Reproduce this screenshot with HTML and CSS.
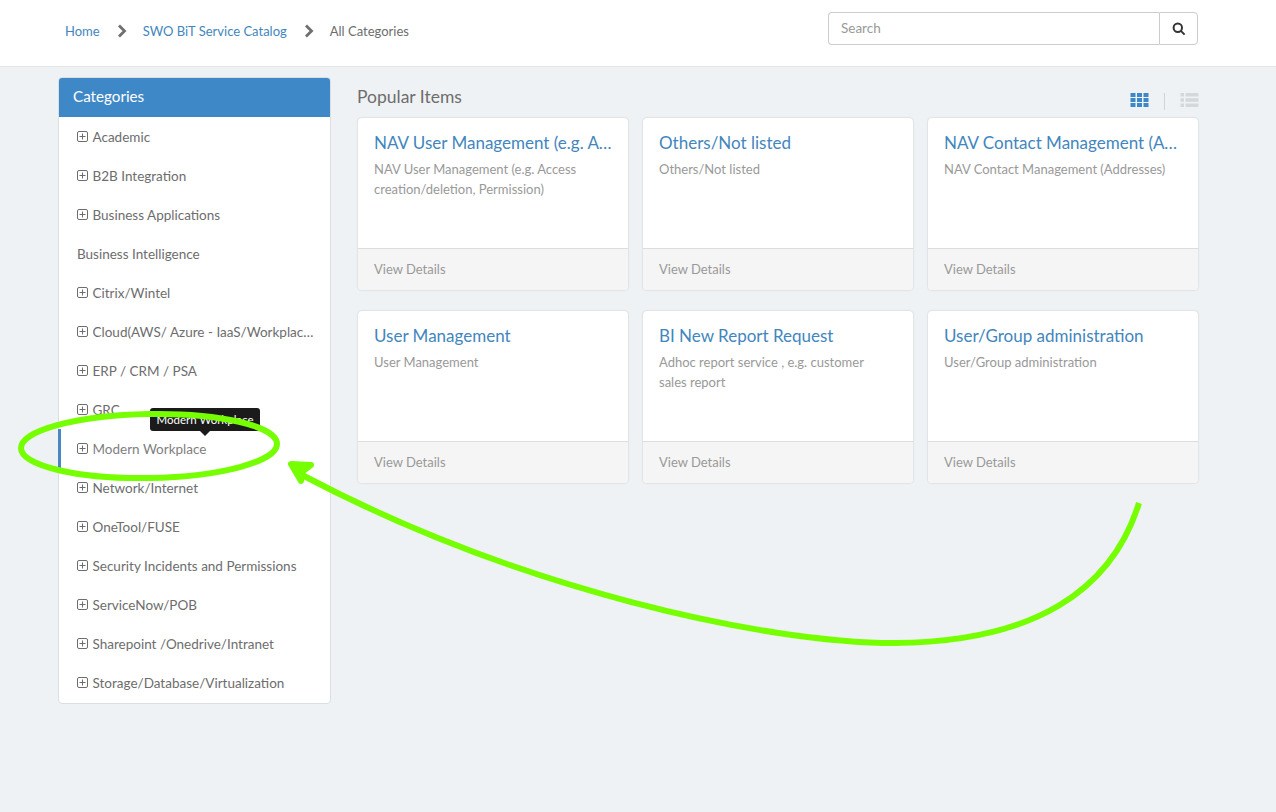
FILE: index.html
```html
<!DOCTYPE html>
<html lang="en">
<head>
    <meta charset="UTF-8">
    <title>All Categories</title>
    <link rel="stylesheet" href="styles.css">
</head>
<body>

    <header class="topbar">
        <nav class="crumbs">
            <a href="#">Home</a>
            <svg class="chev" viewBox="0 0 10 14"><path d="M2 1.5 7.5 7 2 12.5" /></svg>
            <a href="#">SWO BiT Service Catalog</a>
            <svg class="chev" viewBox="0 0 10 14"><path d="M2 1.5 7.5 7 2 12.5" /></svg>
            <span>All Categories</span>
        </nav>
        <div class="search">
            <input type="text" placeholder="Search">
            <button type="button" aria-label="Search">
                <svg viewBox="0 0 14 14"><circle cx="5.8" cy="5.8" r="4.2" /><path d="M8.9 8.9 12.6 12.6" /></svg>
            </button>
        </div>
    </header>

    <div class="page">
        <aside class="sidebar">
            <h2>Categories</h2>
            <ul>
                <li><svg class="plus" viewBox="0 0 11 11"><rect x=".5" y=".5" width="10" height="10" rx="1.5" /><path d="M5.5 2.5v6M2.5 5.5h6" /></svg>Academic</li>
                <li><svg class="plus" viewBox="0 0 11 11"><rect x=".5" y=".5" width="10" height="10" rx="1.5" /><path d="M5.5 2.5v6M2.5 5.5h6" /></svg>B2B Integration</li>
                <li><svg class="plus" viewBox="0 0 11 11"><rect x=".5" y=".5" width="10" height="10" rx="1.5" /><path d="M5.5 2.5v6M2.5 5.5h6" /></svg>Business Applications</li>
                <li class="leaf">Business Intelligence</li>
                <li><svg class="plus" viewBox="0 0 11 11"><rect x=".5" y=".5" width="10" height="10" rx="1.5" /><path d="M5.5 2.5v6M2.5 5.5h6" /></svg>Citrix/Wintel</li>
                <li><svg class="plus" viewBox="0 0 11 11"><rect x=".5" y=".5" width="10" height="10" rx="1.5" /><path d="M5.5 2.5v6M2.5 5.5h6" /></svg><span class="clip">Cloud(AWS/ Azure - IaaS/Workplace/Networking)</span></li>
                <li><svg class="plus" viewBox="0 0 11 11"><rect x=".5" y=".5" width="10" height="10" rx="1.5" /><path d="M5.5 2.5v6M2.5 5.5h6" /></svg>ERP / CRM / PSA</li>
                <li><svg class="plus" viewBox="0 0 11 11"><rect x=".5" y=".5" width="10" height="10" rx="1.5" /><path d="M5.5 2.5v6M2.5 5.5h6" /></svg>GRC</li>
                <li class="active"><svg class="plus" viewBox="0 0 11 11"><rect x=".5" y=".5" width="10" height="10" rx="1.5" /><path d="M5.5 2.5v6M2.5 5.5h6" /></svg>Modern Workplace<div class="tip">Modern Workplace</div></li>
                <li><svg class="plus" viewBox="0 0 11 11"><rect x=".5" y=".5" width="10" height="10" rx="1.5" /><path d="M5.5 2.5v6M2.5 5.5h6" /></svg>Network/Internet</li>
                <li><svg class="plus" viewBox="0 0 11 11"><rect x=".5" y=".5" width="10" height="10" rx="1.5" /><path d="M5.5 2.5v6M2.5 5.5h6" /></svg>OneTool/FUSE</li>
                <li><svg class="plus" viewBox="0 0 11 11"><rect x=".5" y=".5" width="10" height="10" rx="1.5" /><path d="M5.5 2.5v6M2.5 5.5h6" /></svg>Security Incidents and Permissions</li>
                <li><svg class="plus" viewBox="0 0 11 11"><rect x=".5" y=".5" width="10" height="10" rx="1.5" /><path d="M5.5 2.5v6M2.5 5.5h6" /></svg>ServiceNow/POB</li>
                <li><svg class="plus" viewBox="0 0 11 11"><rect x=".5" y=".5" width="10" height="10" rx="1.5" /><path d="M5.5 2.5v6M2.5 5.5h6" /></svg>Sharepoint /Onedrive/Intranet</li>
                <li><svg class="plus" viewBox="0 0 11 11"><rect x=".5" y=".5" width="10" height="10" rx="1.5" /><path d="M5.5 2.5v6M2.5 5.5h6" /></svg>Storage/Database/Virtualization</li>
            </ul>
        </aside>

        <main class="content">
            <div class="content-head">
                <h2>Popular Items</h2>
                <div class="views">
                    <svg class="grid-ico" viewBox="0 0 18 14"><path d="M0 0h5v4H0zM6.5 0h5v4h-5zM13 0h5v4h-5zM0 5h5v4H0zM6.5 5h5v4h-5zM13 5h5v4h-5zM0 10h5v4H0zM6.5 10h5v4h-5zM13 10h5v4h-5z" /></svg>
                    <span class="sep"></span>
                    <svg class="list-ico" viewBox="0 0 18 14"><path d="M0 0h3.5v3.6H0zM5 0h13v3.6H5zM0 5.2h3.5v3.6H0zM5 5.2h13v3.6H5zM0 10.4h3.5V14H0zM5 10.4h13V14H5z" /></svg>
                </div>
            </div>
            <div class="cards">
                <article class="card">
                    <div class="card-body">
                        <h3>NAV User Management (e.g. Access creation/deletion, Permission)</h3>
                        <p>NAV User Management (e.g. Access creation/deletion, Permission)</p>
                    </div>
                    <div class="card-foot">View Details</div>
                </article>
                <article class="card">
                    <div class="card-body">
                        <h3>Others/Not listed</h3>
                        <p>Others/Not listed</p>
                    </div>
                    <div class="card-foot">View Details</div>
                </article>
                <article class="card">
                    <div class="card-body">
                        <h3>NAV Contact Management (Addresses)</h3>
                        <p>NAV Contact Management (Addresses)</p>
                    </div>
                    <div class="card-foot">View Details</div>
                </article>
                <article class="card">
                    <div class="card-body">
                        <h3>User Management</h3>
                        <p>User Management</p>
                    </div>
                    <div class="card-foot">View Details</div>
                </article>
                <article class="card">
                    <div class="card-body">
                        <h3>BI New Report Request</h3>
                        <p>Adhoc report service , e.g. customer sales report</p>
                    </div>
                    <div class="card-foot">View Details</div>
                </article>
                <article class="card">
                    <div class="card-body">
                        <h3>User/Group administration</h3>
                        <p>User/Group administration</p>
                    </div>
                    <div class="card-foot">View Details</div>
                </article>
            </div>
        </main>
    </div>

    <!-- green marker drawn over the screenshot -->
    <svg class="marker" viewBox="0 0 1276 812">
        <ellipse cx="149" cy="446" rx="128" ry="32" transform="rotate(-1 149 446)" />
        <path d="M1139 503C1112 590 1035 642 895 643 765 643 520 590 302 475" />
        <path class="head" d="M291 464 311 465 303 471 301 481Z" />
    </svg>

</body>
</html>
```

FILE: styles.css
```css
* {
    box-sizing: border-box;
}
body {
    margin: 0;
    height: 812px;
    overflow: hidden;
    position: relative;
    font-family: "Lato", "Open Sans", sans-serif;
    font-size: 13.5px;
    color: #6d6d6d;
    background-color: #eff2f4;
}
a {
    color: #4286bd;
    text-decoration: none;
}

.topbar {
    height: 67px;
    background-color: white;
    border-bottom: 1px solid #dfe5e8;
    display: flex;
    justify-content: space-between;
    padding: 12px 78px 0 65px;
}
.crumbs {
    display: flex;
    align-items: center;
    height: 38px;
    font-size: 13px;
}
.crumbs span {
    color: #6d6d6d;
}
.chev {
    width: 10px;
    height: 14px;
    margin: 0 16px 0 17px;
    fill: none;
    stroke: #6f6f6f;
    stroke-width: 2.8;
}
.search {
    display: flex;
    width: 370px;
    height: 33px;
}
.search input {
    flex: 1;
    min-width: 0;
    height: 33px;
    padding: 0 12px 1px;
    font: inherit;
    color: #555;
    border: 1px solid #ccc;
    border-right: none;
    border-radius: 4px 0 0 4px;
}
.search input::placeholder {
    color: #999;
}
.search button {
    width: 39px;
    height: 33px;
    padding: 0;
    background-color: white;
    border: 1px solid #ccc;
    border-radius: 0 4px 4px 0;
}
.search svg {
    display: block;
    width: 14px;
    height: 14px;
    margin: auto;
    fill: none;
    stroke: #333;
    stroke-width: 2;
}

.page {
    display: flex;
    align-items: flex-start;
    gap: 26px;
    padding: 10px 78px 0 58px;
}

.sidebar {
    width: 273px;
    background-color: white;
    border: 1px solid #d9dfe3;
    border-radius: 4px;
    flex-shrink: 0;
}
.sidebar h2 {
    margin: 0;
    height: 39px;
    line-height: 37px;
    padding-left: 14px;
    font-size: 15.2px;
    font-weight: 400;
    color: white;
    background-color: #3f88c8;
    border-radius: 3px 3px 0 0;
}
.sidebar ul {
    list-style: none;
    margin: 0;
    padding: 0 0 1px;
}
.sidebar li {
    position: relative;
    display: flex;
    align-items: center;
    height: 39px;
    padding: 0 16px 0 17.5px;
    white-space: nowrap;
}
.sidebar li.leaf {
    padding-left: 18px;
}
.sidebar li.active {
    color: #808080;
    border-left: 3px solid #4b88c2;
    margin-left: -1px;
    padding-left: 15.5px;
}
.plus {
    width: 11px;
    height: 11px;
    margin-right: 5px;
    flex-shrink: 0;
    fill: none;
    stroke: #6d6d6d;
}
.clip {
    overflow: hidden;
    text-overflow: ellipsis;
}
.tip {
    position: absolute;
    left: 89px;
    top: -21px;
    width: 110px;
    height: 23px;
    line-height: 23px;
    text-align: center;
    font-size: 11.5px;
    color: white;
    background-color: #1b1b1b;
    border-radius: 3px;
}
.tip::after {
    content: "";
    position: absolute;
    left: 50%;
    top: 23px;
    margin-left: -5px;
    border: 5px solid transparent;
    border-top-color: #1b1b1b;
    border-bottom: none;
}

.content {
    flex: 1;
    min-width: 0;
}
.content-head {
    display: flex;
    justify-content: space-between;
    align-items: flex-start;
    height: 41px;
}
.content-head h2 {
    margin: 0;
    font-size: 17.5px;
    font-weight: 400;
    line-height: 39px;
    color: #6d6d6d;
}
.views {
    display: flex;
    align-items: center;
    padding-top: 12px;
    margin-right: -1px;
}
.grid-ico {
    width: 19px;
    height: 14px;
    fill: #3f88c8;
}
.list-ico {
    width: 19px;
    height: 14px;
    fill: #d4d8da;
}
.sep {
    width: 1px;
    height: 17px;
    margin: 4px 15px 0 15px;
    background-color: #cfd3d6;
}

.cards {
    display: grid;
    grid-template-columns: repeat(3, minmax(0, 1fr));
    gap: 21px 15px;
    margin-left: 1px;
}
.card {
    height: 172px;
    display: flex;
    flex-direction: column;
    min-width: 0;
    background-color: white;
    border-radius: 4px;
    box-shadow: 0 0 2px rgba(0, 0, 0, 0.2);
}
.card-body {
    flex: 1;
    min-height: 0;
    padding: 12px 16px 0;
}
.card h3 {
    margin: 0 0 4px;
    font-size: 17px;
    font-weight: 400;
    line-height: 25px;
    color: #4286bd;
    white-space: nowrap;
    overflow: hidden;
    text-overflow: ellipsis;
}
.card p {
    margin: 0;
    padding-right: 8px;
    font-size: 13px;
    line-height: 20px;
    color: #999;
}
.card-foot {
    height: 42px;
    line-height: 41px;
    padding-left: 16px;
    font-size: 13px;
    color: #999;
    background-color: #f5f5f5;
    border-top: 1px solid #ddd;
    border-radius: 0 0 4px 4px;
}

.marker {
    position: absolute;
    left: 0;
    top: 0;
    width: 1276px;
    height: 812px;
    pointer-events: none;
    fill: none;
    stroke: #76ff00;
    stroke-width: 6;
}
.marker .head {
    fill: #76ff00;
    stroke-linejoin: round;
}
```
